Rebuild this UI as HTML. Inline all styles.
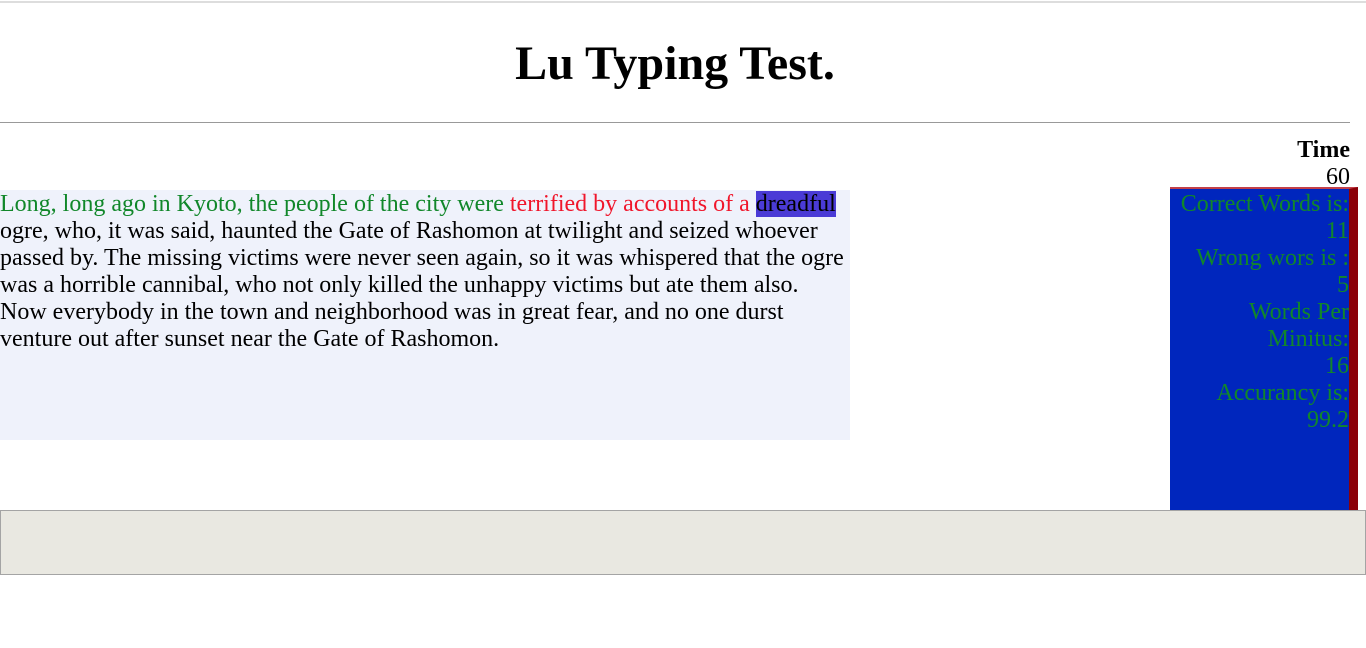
<!DOCTYPE html>
<html><head><meta charset="utf-8"><style>
html,body{margin:0;padding:0;background:#fff;width:1366px;height:648px;overflow:hidden;position:relative;font-family:"Liberation Serif",serif;}
.top{position:absolute;left:0;top:1px;width:1366px;height:2px;background:#ddd;}
h1{position:absolute;left:0;width:1350px;margin:0;text-align:center;font-size:48px;line-height:48px;top:40px;font-weight:bold;}
.hr{position:absolute;left:0;top:122px;width:1350px;height:1px;background:#999;}
.time{position:absolute;right:16px;top:137px;text-align:right;font-size:24px;line-height:27px;}
.text{position:absolute;left:0;top:190px;width:850px;height:249px;padding-top:1px;background:#eff2fb;font-size:24px;line-height:27px;}
.g{color:#11872a}.r{color:#f0162b}.h{background:#4a3bd6;color:#000;}
.stats{position:absolute;left:1170px;top:187px;width:179px;height:340px;background:#0026bd;border-right:9px solid #8a0008;border-top:2px solid #c3404a;font-size:24px;line-height:27px;color:#11872a;text-align:right;}
.inp{position:absolute;left:0;top:510px;width:1364px;height:63px;background:#e9e8e1;border:1px solid #a4a4a4;}
</style></head><body>
<div class="top"></div>
<h1>Lu Typing Test.</h1>
<div class="hr"></div>
<div class="time"><b>Time</b><br>60</div>
<div class="text"><span class="g">Long, long ago in Kyoto, the people of the city were</span> <span class="r">terrified by accounts of a</span> <span class="h">dreadful</span> ogre, who, it was said, haunted the Gate of Rashomon at twilight and seized whoever passed by. The missing victims were never seen again, so it was whispered that the ogre was a horrible cannibal, who not only killed the unhappy victims but ate them also. Now everybody in the town and neighborhood was in great fear, and no one durst venture out after sunset near the Gate of Rashomon.</div>
<div class="stats"><div style="margin-top:2px">Correct Words is:<br>11<br>Wrong wors is :<br>5<br>Words Per Minitus:<br>16<br>Accurancy is:<br>99.2</div></div>
<div class="inp"></div>
</body></html>
